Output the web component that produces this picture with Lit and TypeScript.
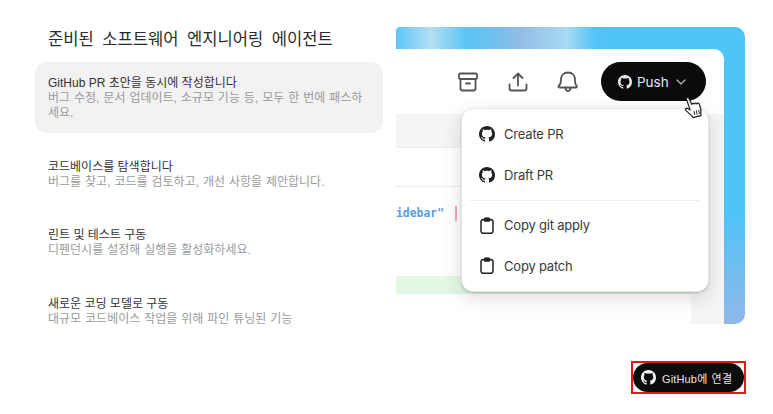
import { LitElement, html, css } from "lit";
import { customElement } from "lit/decorators.js";

const GH = "M8 0C3.58 0 0 3.58 0 8c0 3.54 2.29 6.53 5.47 7.59.4.07.55-.17.55-.38 0-.19-.01-.82-.01-1.49-2.01.37-2.53-.49-2.69-.94-.09-.23-.48-.94-.82-1.13-.28-.15-.68-.52-.01-.53.63-.01 1.08.58 1.23.82.72 1.21 1.87.87 2.33.66.07-.52.28-.87.51-1.07-1.78-.2-3.64-.89-3.64-3.95 0-.87.31-1.59.82-2.15-.08-.2-.36-1.02.08-2.12 0 0 .67-.21 2.2.82.64-.18 1.32-.27 2-.27.68 0 1.36.09 2 .27 1.53-1.04 2.2-.82 2.2-.82.44 1.1.16 1.92.08 2.12.51.56.82 1.27.82 2.15 0 3.07-1.87 3.75-3.65 3.95.29.25.54.73.54 1.48 0 1.07-.01 1.93-.01 2.2 0 .21.15.46.55.38A8.013 8.013 0 0016 8c0-4.42-3.58-8-8-8z";

const gh = (cls: string) => html`<svg class=${cls} viewBox="0 0 16 16" fill="currentColor"><path d=${GH}></path></svg>`;
const clip = html`<svg class="mi clip" viewBox="0 0 14 17" fill="none" stroke="#222" stroke-width="1.5" stroke-linejoin="round"><rect x="1" y="2.600" width="12" height="13.700" rx="2.600"></rect><path d="M4.300 1.800c0-.5.3-.9.9-.9h3.600c.6 0 .9.4.9.9v2.400H4.300z" fill="#222" stroke-width="1"></path></svg>`;

const items = [
  ["GitHub PR 초안을 동시에 작성합니다", "버그 수정, 문서 업데이트, 소규모 기능 등, 모두 한 번에 패스하세요.", true],
  ["코드베이스를 탐색합니다", "버그를 찾고, 코드를 검토하고, 개선 사항을 제안합니다.", false],
  ["린트 및 테스트 구동", "디펜던시를 설정해 실행을 활성화하세요.", false],
  ["새로운 코딩 모델로 구동", "대규모 코드베이스 작업을 위해 파인 튜닝된 기능", false],
] as const;

@customElement("app-root")
export class AppRoot extends LitElement {
  static styles = css`
    :host {
      display: block;
      width: 773px;
      height: 414px;
      overflow: hidden;
      background: #fff;
      font-family: "Liberation Sans", "Noto Sans CJK KR", sans-serif;
      color: #222;
    }
    .main { display: flex; height: 361px; padding: 27px 28px 0 35px; box-sizing: border-box; gap: 13px; }
    .left { width: 348px; flex: none; }
    h1 { margin: 2px 0 11px; padding: 0 13px; font-size: 16.600px; word-spacing: 3.800px; line-height: 22px; font-weight: 400; color: #2b2b2b; }
    .item { padding: 0 13px; font-size: 12px; line-height: 15px; margin-bottom: 38.500px; }
    .item.on { background: #f2f2f2; height: 71px; box-sizing: border-box; padding: 14px 15px 0 13px; border-radius: 12px; margin-bottom: 26.500px; }
    .t { color: #333; }
    .d { color: #9a9a9a; word-spacing: .6px; }
    .panel {
      position: relative;
      width: 349px;
      height: 297px;
      flex: none;
      padding: 22px 21px 0 0;
      box-sizing: border-box;
      border-radius: 4px 10px 10px 0;
      overflow: hidden;
      background:
        linear-gradient(90deg, #5cc5f5 0%, #b4dff3 10%, #5cc5f5 20%, #6cc0ef 27%, #93bde6 36%, #a8daf3 49%, #52c4f7 57%, rgba(82,196,247,0) 70%) top / 100% 22px no-repeat,
        linear-gradient(180deg, #4fc4f7 0%, #4fc4f7 62%, #8fb8e8 100%);
    }
    .win { height: 100%; background: #fff; border-top-right-radius: 10px; display: flex; flex-direction: column; overflow: hidden; }
    .bar { height: 65px; flex: none; display: flex; align-items: center; padding-left: 60px; box-sizing: border-box; }
    .ic { width: 24px; height: 24px; color: #555; flex: none; }
    .ic + .ic { margin-left: 26px; }
    .push {
      margin-left: 21px; width: 105px; height: 39px; border-radius: 20px; background: #0b0b0b; color: #e8e8e8; box-sizing: border-box; padding-left: 17px;
      display: flex; align-items: center; gap: 5px; font: 400 13.500px Inter, sans-serif;
    }
    .push .g { width: 14px; height: 14px; }
    .chev { width: 12px; height: 12px; margin-left: 1px; color: #bbb; }
    .body { flex: 1; display: flex; min-height: 0; }
    .code { flex: 1; display: flex; flex-direction: column; }
    .strip { width: 33px; background: #f5f5f5; flex: none; }
    .tabs { height: 33px; background: #f5f5f5; border-bottom: 1px solid #ececec; flex: none; }
    .sub { height: 38px; border-bottom: 1px solid #ececec; flex: none; }
    .line { height: 52px; box-sizing: border-box; display: flex; align-items: center; gap: 11px; flex: none; font: 700 11.400px/16px "DejaVu Sans Mono", monospace; color: #5a9ae6; white-space: nowrap; }
    .pipe { width: 2px; height: 15px; background: #f3a9b3; flex: none; }
    .green { height: 18px; background: #e3f8e3; margin-top: 37px; flex: none; }
    .menu {
      position: absolute; left: 65px; top: 81px; width: 248px; height: 184px; box-sizing: border-box;
      background: #fff; border-radius: 12px; border: 1px solid #e6e6e6;
      box-shadow: 0 6px 20px rgba(0,0,0,.14), 0 1px 2px rgba(0,0,0,.18);
      padding: 5px 9px 0 8px;
      font: 400 13px/20px Inter, sans-serif; letter-spacing: -.2px; color: #3a3a3a;
    }
    .mrow { height: 40.500px; display: flex; align-items: center; gap: 9px; padding-left: 9px; }
    .mi { width: 16px; height: 16px; color: #222; flex: none; }
    .mi.clip { height: 17px; }
    .sep { height: 1px; background: #eee; margin: 5px 0 4px; }
    .cursor { position: absolute; left: 286px; top: 68px; width: 23px; height: 25px; }
    .foot { display: flex; justify-content: flex-end; padding-right: 27px; }
    .cta { border: 2px solid #e8141c; height: 33px; box-sizing: border-box; width: 115px; background: #fff; }
    .cta div {
      height: 100%; background: #0c0c0c; color: #e6e6e6; border-radius: 15px; display: flex; align-items: center; gap: 6px; box-sizing: border-box; padding-left: 8px;
      font-size: 11px; word-spacing: 1px; letter-spacing: .15px; white-space: nowrap;
    }
    .cta svg { width: 15px; height: 15px; color: #f4f4f4; }
  `;

  render() {
    return html`
      <div class="main">
        <section class="left">
          <h1>준비된 소프트웨어 엔지니어링 에이전트</h1>
          ${items.map(([t, d, on]) => html`<div class="item ${on ? "on" : ""}"><div class="t">${t}</div><div class="d">${d}</div></div>`)}
        </section>
        <section class="panel">
          <div class="win">
            <div class="bar">
              <svg class="ic" viewBox="0 0 24 24" fill="none" stroke="currentColor" stroke-width="1.800" stroke-linejoin="round" stroke-linecap="round"><rect x="3" y="3.500" width="18" height="5.500" rx="1.600"></rect><path d="M4.500 9v9.500a2 2 0 0 0 2 2h11a2 2 0 0 0 2-2V9M10 13.500h4"></path></svg>
              <svg class="ic" viewBox="0 0 24 24" fill="none" stroke="currentColor" stroke-width="1.800" stroke-linejoin="round" stroke-linecap="round"><path d="M12 15.500V3.500M7.500 8 12 3.500 16.500 8M3.500 14.500v4a2 2 0 0 0 2 2h13a2 2 0 0 0 2-2v-4"></path></svg>
              <svg class="ic" viewBox="0 0 24 24" fill="none" stroke="currentColor" stroke-width="1.800" stroke-linejoin="round" stroke-linecap="round"><path d="M12 2.500c-4.400 0-7 3.200-7 7.200 0 3.800-1 5.200-2.300 6.300-.5.5-.2 1.500.6 1.500h16.800c.8 0 1.100-1 .6-1.500C19.500 14.900 19 13.500 19 9.700c0-4-2.600-7.200-7-7.200zM9.500 17.500c0 2 1 3.500 2.500 3.500s2.500-1.500 2.500-3.500"></path></svg>
              <div class="push">${gh("g")}<span>Push</span><svg class="chev" viewBox="0 0 12 12" fill="none" stroke="currentColor" stroke-width="1.200" stroke-linecap="round" stroke-linejoin="round"><path d="M2 4l4 4 4-4"></path></svg></div>
            </div>
            <div class="body">
              <div class="code">
                <div class="tabs"></div>
                <div class="sub"></div>
                <div class="line"><span>idebar"</span><i class="pipe"></i></div>
                <div class="green"></div>
              </div>
              <div class="strip"></div>
            </div>
          </div>
          <div class="menu">
            <div class="mrow">${gh("mi")}Create PR</div>
            <div class="mrow">${gh("mi")}Draft PR</div>
            <div class="sep"></div>
            <div class="mrow">${clip}Copy git apply</div>
            <div class="mrow">${clip}Copy patch</div>
          </div>
          <svg class="cursor" viewBox="0 0 22 26" stroke="#222" stroke-width="1.300" stroke-linejoin="round" stroke-linecap="round" fill="#fff"><g transform="rotate(-14 11 13)"><path d="M6 2.500c0-1.400 2.400-1.400 2.600 0L10 9.500c.5-1.200 2.400-1 2.700.2.500-1 2.300-.8 2.600.5.600-.8 2.300-.5 2.500 1 .4 3 .2 6.500-.8 9.300l-.5 2.500H8l-1-2.300L2.500 14c-.8-1.400 1-2.600 2.300-1.500L7 14.500z"></path><path d="M10.500 17v3.500M13 17v3.500M15.500 17v3.500" stroke-width="1"></path></g></svg>
        </section>
      </div>
      <div class="foot">
        <div class="cta"><div><svg viewBox="0 0 16 16" fill="currentColor"><path d=${GH}></path></svg><span>GitHub에 연결</span></div></div>
      </div>
    `;
  }
}
